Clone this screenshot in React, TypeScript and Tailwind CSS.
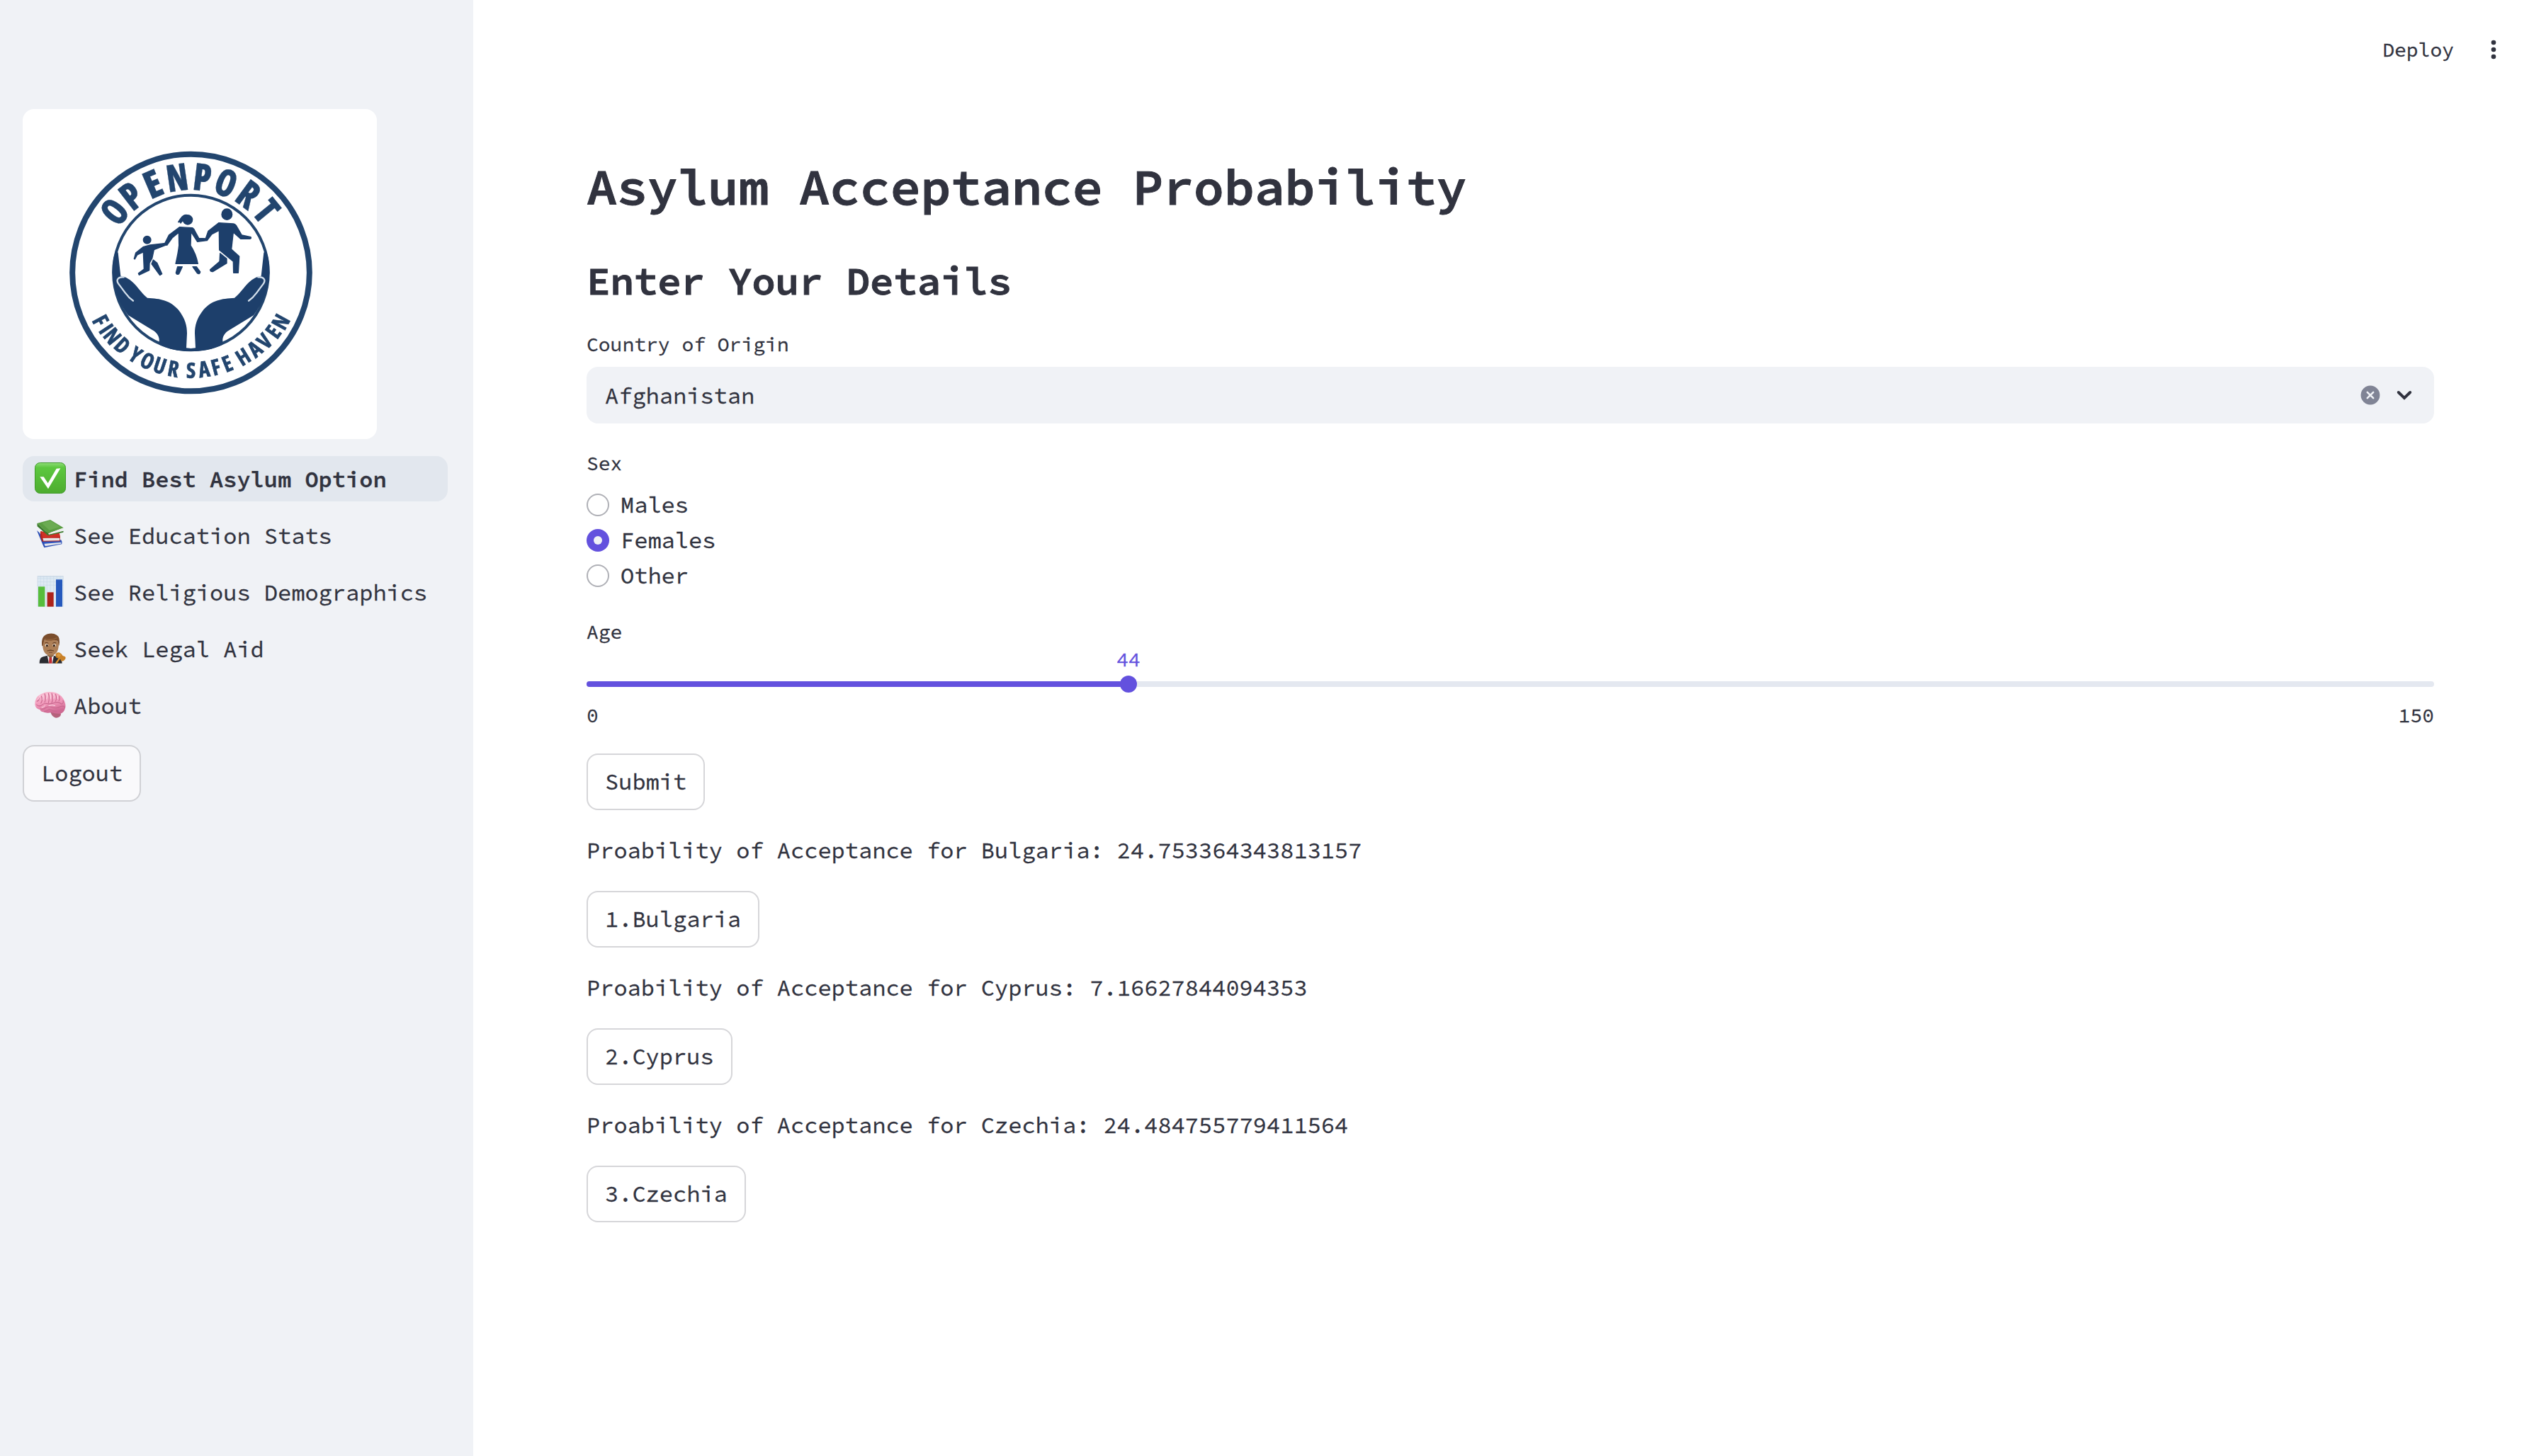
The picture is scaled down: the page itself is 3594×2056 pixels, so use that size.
import type { ReactNode } from "react";

const NAVY = "#1d3f6b";

// [letter, angle on the arc, baseline radius, horizontal scale]
const topLetters: [string, number, number, number][] = [
  ["O", -51.4, 357, 0.87], ["P", -37.8, 354, 0.92], ["E", -23.2, 351, 1], ["N", -8.2, 350, 0.87],
  ["P", 6.9, 350, 0.92], ["O", 21.4, 351, 0.87], ["R", 36.4, 354, 0.9], ["T", 50.8, 357, 0.92],
];

// [letter, angle on the arc, baseline radius]
const bottomLetters: [string, number, number][] = [
  ["F", 62, 467], ["I", 56.4, 464], ["N", 51, 461], ["D", 43.2, 457],
  ["Y", 34, 453], ["O", 26.2, 450], ["U", 18.4, 448], ["R", 10.3, 447],
  ["S", 0, 446], ["A", -7.8, 446], ["F", -14.8, 447], ["E", -21.8, 449],
  ["H", -31.8, 452], ["A", -39.9, 455], ["V", -47, 459], ["E", -54.3, 463], ["N", -61.3, 467],
];

function Hand() {
  return (
    <g>
      <path
        d="M250 462 L260 470 L271 569 C292 572 312 583 332 605 C350 625 366 648 384 662 C440 665 480 672 515 712 C545 750 552 780 552 812 L549 874 L569 876 L569 888 C520 888 475 880 434 860 L434 845 C436 825 424 808 404 797 L302 735 C262 680 240 620 236 555 C235 520 240 490 250 462 Z"
        fill={NAVY}
      />
      <path d="M284 574 C262 572 250 584 261 601 L290 640 Q306 662 324 674" fill="none" stroke="#d3dfeb" strokeWidth="7" strokeLinecap="round" />
    </g>
  );
}

function Logo() {
  return (
    <svg viewBox="-144 -138 1500 1398" className="block h-[466px] w-[500px] blur-[0.6px]">
      <circle cx="568.5" cy="555" r="502" fill="none" stroke="#22456e" strokeWidth="24" />
      <circle cx="568.5" cy="555" r="328" fill="none" stroke="#22456e" strokeWidth="12" />
      <g fill="#22456e" stroke="#22456e" className="font-['Open_Sans'] [font-stretch:75%]" textAnchor="middle">
        {topLetters.map(([c, a, r, s], i) => (
          <text key={i} fontSize="160" fontWeight="800" strokeWidth="1" transform={`translate(568.5 555) rotate(${a}) translate(0 ${-r}) scale(${s} 1)`}>
            {c}
          </text>
        ))}
        {bottomLetters.map(([c, a, r], i) => (
          <text key={i} fontSize="93" fontWeight="700" strokeWidth="2" transform={`translate(568.5 555) rotate(${a}) translate(0 ${r}) scale(0.97 1)`}>
            {c}
          </text>
        ))}
      </g>
      <Hand />
      <g transform="translate(1137 0) scale(-1 1)">
        <Hand />
      </g>
      <g fill={NAVY} stroke={NAVY} strokeWidth="4" strokeLinejoin="round">
        <circle cx="383" cy="416" r="16" />
        <path d="M328 496 L335 471 L366 446 L396 438 L456 431 L464 438 L412 458 L404 495 L393 514 L392 545 L349 565 L346 558 L370 540 L367 468 L341 480 L331 498 Z" />
        <path d="M409 501 L425 514 L446 560 L437 566 L402 518 Z" />
        <circle cx="555" cy="331" r="20" />
        <path d="M515 341 Q522 328 532 317 Q542 309 552 311 L540 334 L532 336 L525 345 L523 340 Z" />
        <path d="M520 362 L574 365 Q582 368 586 380 L602 409 L632 411 L636 419 L596 424 L569 382 L567 440 Q590 475 598 517 L504 517 Q515 470 518 440 L517 385 L490 407 L467 439 L458 431 L476 395 Z" />
        <path d="M512 530 L532 530 L518 560 Q508 566 505 556 Z" />
        <path d="M576 530 L592 530 L608 552 Q606 564 596 558 Z" />
        <ellipse cx="721" cy="308" rx="22" ry="23" />
        <path d="M686 344 L748 348 Q758 350 764 362 L784 396 L822 404 Q826 410 818 412 L779 412 L748 384 L740 456 L773 486 L769 556 L749 556 L748 508 L689 459 L688 376 L656 393 L637 419 L631 410 L642 379 Z" />
        <path d="M692 473 L720 496 L720 515 L661 551 Q650 552 650 542 L690 508 Z" />
      </g>
    </svg>
  );
}

function EmojiFrame({ children }: { children: ReactNode }) {
  return (
    <svg viewBox="0 0 132 132" className="-mt-[2px] block h-11 w-11 shrink-0">
      {children}
    </svg>
  );
}

function CheckEmoji() {
  return (
    <EmojiFrame>
      <defs>
        <linearGradient id="chk" x1="0" y1="0" x2="0" y2="1">
          <stop offset="0" stopColor="#8fdc78" />
          <stop offset="0.16" stopColor="#5cc73f" />
          <stop offset="1" stopColor="#4dac2f" />
        </linearGradient>
      </defs>
      <rect x="1.5" y="1.5" width="129" height="129" rx="21" fill="url(#chk)" stroke="#3f9a2a" strokeWidth="3" />
      <path d="M22 61 L38 61 L56 88 L92 26 L109 25 L57 112 Z" fill="#fff" />
    </EmojiFrame>
  );
}

function BooksEmoji() {
  return (
    <EmojiFrame>
      <path d="M9 48 L20 58 L46 106 L114 92 L115 99 L115 106 L40 121 L34 108 Z" fill="#2c4fb4" />
      <path d="M40 104 L112 93 L112 104 L44 115 Z" fill="#e4e6ea" />
      <path d="M30 92 L112 88 L116 98 L44 104 Z" fill="#2f56bf" />
      <path d="M24 52 L104 60 L108 78 L107 94 L32 95 L24 76 Z" fill="#b32420" />
      <path d="M34 80 L106 80 L105 91 L37 92 Z" fill="#e8e6e4" />
      <path d="M26 50 L56 66 L104 58 L108 76 L34 80 Z" fill="#cf3126" />
      <path d="M10 18 L66 3 L122 37 L57 61 Z" fill="#5a9d42" />
      <path d="M30 17 L66 7 L108 33 L62 47 Z" fill="#6bab52" />
      <path d="M57 61 L120 38 L117 54 L60 66 Z" fill="#eceeed" />
      <path d="M10 18 L57 61 L59 66 L122 50 L121 56 L56 70 L11 31 Z" fill="#3b7a2c" />
    </EmojiFrame>
  );
}

function ChartEmoji() {
  return (
    <EmojiFrame>
      <rect x="11" y="0" width="111" height="131" fill="#cfdce8" />
      <rect x="14" y="5" width="105" height="126" fill="#dfeaf4" />
      <path d="M24 0V131M38 0V131M52 0V131M66 0V131M80 0V131M94 0V131M108 0V131M11 12H122M11 26H122M11 40H122" stroke="#c9dae8" strokeWidth="2" />
      <rect x="15" y="46" width="28" height="85" fill="#57bd3c" />
      <rect x="53" y="70" width="27" height="61" fill="#ad231b" />
      <rect x="90" y="16" width="27" height="115" fill="#2659bd" />
    </EmojiFrame>
  );
}

function JudgeEmoji() {
  return (
    <EmojiFrame>
      <path d="M20 131 Q20 106 36 103 L54 98 L80 98 L98 104 Q116 108 116 131 Z" fill="#2b2c31" />
      <path d="M53 97 L67 108 L81 97 L75 131 L60 131 Z" fill="#f0f0f2" />
      <path d="M62 104 L72 104 L74 131 L60 131 Z" fill="#c12a2e" />
      <path d="M54 84 H80 V98 L67 107 L54 98 Z" fill="#8d6340" />
      <path d="M33 44 Q33 88 55 95 Q67 101 79 95 Q102 88 102 44 Q84 22 67 22 Q46 22 33 44 Z" fill="#ad7f57" />
      <path d="M31 58 Q25 16 54 7 Q76 0 93 11 Q110 20 103 58 L99 40 Q94 30 78 33 Q56 37 42 31 Q36 42 35 56 Z" fill="#7a4d2c" />
      <path d="M42 27 Q66 36 95 23" stroke="#94643b" strokeWidth="4" fill="none" />
      <ellipse cx="51" cy="55" rx="7" ry="6" fill="#f6efe6" />
      <ellipse cx="83" cy="55" rx="7" ry="6" fill="#f6efe6" />
      <circle cx="52" cy="56" r="5" fill="#3a2314" />
      <circle cx="82" cy="56" r="5" fill="#3a2314" />
      <path d="M43 45 Q51 41 58 46M76 46 Q84 41 91 45" stroke="#5a3620" strokeWidth="3" fill="none" />
      <path d="M53 78 Q67 71 81 78 Q74 77 67 77 Q60 77 53 78 Z" fill="#6b4428" stroke="#6b4428" strokeWidth="2.5" />
      <path d="M60 85 H75" stroke="#7a4a35" strokeWidth="3" />
      <path d="M90 131 L108 106" stroke="#e0922b" strokeWidth="7" />
      <path d="M88 96 Q90 84 103 85 L112 90 L119 99 L129 103 Q135 112 122 121 L112 122 L108 112 L92 108 Z" fill="#c98128" />
      <path d="M92 96 L102 88 L112 96 L102 106 Z" fill="#d99a40" />
    </EmojiFrame>
  );
}

function BrainEmoji() {
  return (
    <EmojiFrame>
      <defs>
        <linearGradient id="brn" x1="0" y1="0" x2="0.3" y2="1">
          <stop offset="0" stopColor="#fbc4d6" />
          <stop offset="0.6" stopColor="#f097b9" />
          <stop offset="1" stopColor="#cf6a93" />
        </linearGradient>
      </defs>
      <path d="M66 96 Q74 120 90 122 Q108 121 111 108 L108 92 Z" fill="#b5627c" />
      <path d="M1 66 Q0 34 26 22 Q48 8 76 13 Q106 17 120 40 Q134 62 129 80 Q125 98 110 104 Q88 106 70 99 Q52 104 36 97 Q24 96 23 88 Q4 84 1 66 Z" fill="url(#brn)" />
      <g fill="none" stroke="#c9698f" strokeWidth="3.4" strokeLinecap="round">
        <path d="M8 66 Q16 76 30 68 Q40 58 54 62 Q72 64 84 58 Q98 52 112 62" />
        <path d="M24 84 Q38 88 48 78 Q62 72 76 78 Q92 84 108 74 Q120 70 128 76" />
        <path d="M40 96 Q54 92 62 86 Q76 92 92 94" />
        <path d="M10 52 Q20 48 18 36M26 60 Q36 46 28 30M42 56 Q50 40 42 20M58 58 Q64 38 58 18M72 58 Q80 42 72 18M88 52 Q96 38 88 22M102 50 Q108 44 104 30M114 64 Q124 60 120 48" />
      </g>
      <g fill="none" stroke="#ffe0ea" strokeWidth="3" strokeLinecap="round">
        <path d="M14 44 Q18 34 24 28M34 44 Q38 34 36 26M50 42 Q54 30 52 20M66 42 Q70 30 66 20M81 40 Q84 32 80 22M97 40 Q99 34 96 28M30 78 Q40 76 44 70M60 70 Q74 66 86 70" />
      </g>
    </EmojiFrame>
  );
}

const navItems = [
  { icon: <CheckEmoji />, label: "Find Best Asylum Option", active: true },
  { icon: <BooksEmoji />, label: "See Education Stats", active: false },
  { icon: <ChartEmoji />, label: "See Religious Demographics", active: false },
  { icon: <JudgeEmoji />, label: "Seek Legal Aid", active: false },
  { icon: <BrainEmoji />, label: "About", active: false },
];

function Button({ children }: { children: ReactNode }) {
  return (
    <button className="flex h-20 w-fit shrink-0 items-center rounded-2xl border-2 border-[#d6d6d9] bg-white px-6 text-[32px] leading-none">
      {children}
    </button>
  );
}

function Sidebar() {
  return (
    <aside className="flex w-[668px] shrink-0 flex-col bg-[#f0f2f6] px-8 pt-[154px]">
      <div className="h-[466px] w-[500px] overflow-hidden rounded-2xl bg-white">
        <Logo />
      </div>
      <nav className="mt-6 flex w-[600px] flex-col gap-4">
        {navItems.map((n) => (
          <a
            key={n.label}
            className={
              n.active
                ? "flex h-16 items-center gap-[11px] rounded-2xl bg-[#e2e7ee] pl-[17px] font-semibold"
                : "flex h-16 items-center gap-[11px] rounded-2xl pl-[17px]"
            }
          >
            {n.icon}
            <span className="pt-px text-[32px] leading-none whitespace-nowrap">{n.label}</span>
          </a>
        ))}
      </nav>
      <button className="mt-6 flex h-20 w-fit items-center rounded-2xl border-2 border-[#d0d1d5] bg-[#f9f9fb] px-6 text-[32px] leading-none">
        Logout
      </button>
    </aside>
  );
}

function Label({ children }: { children: ReactNode }) {
  return <div className="flex h-11 items-center text-[28px] leading-none">{children}</div>;
}

function Radio({ label, checked }: { label: string; checked?: boolean }) {
  return (
    <label className="flex h-[50px] items-center gap-4">
      {checked ? (
        <span className="flex h-8 w-8 items-center justify-center rounded-full bg-[#6351de]">
          <span className="h-3 w-3 rounded-full bg-[#f0f2f6]" />
        </span>
      ) : (
        <span className="h-8 w-8 rounded-full border-2 border-[#afb0b6] bg-white" />
      )}
      <span className="text-[32px] leading-none">{label}</span>
    </label>
  );
}

function Slider({ value, max }: { value: number; max: number }) {
  const filled = { width: `${(value / max) * 100}%` };
  return (
    <div className="flex flex-col">
      <div className="flex h-[34px] justify-end" style={filled}>
        <span className="flex w-0 items-center justify-center text-[28px] leading-none text-[#6351de]">{value}</span>
      </div>
      <div className="mt-[14px] flex h-2 rounded bg-[#e4e8f0]">
        <div className="flex items-center justify-end rounded-l bg-[#6351de]" style={filled}>
          <span className="-mr-3 h-6 w-6 shrink-0 rounded-full bg-[#6351de]" />
        </div>
      </div>
      <div className="mt-[18px] flex h-11 items-center justify-between text-[28px] leading-none">
        <span>0</span>
        <span>{max}</span>
      </div>
    </div>
  );
}

const results = [
  { country: "Bulgaria", value: "24.753364343813157" },
  { country: "Cyprus", value: "7.16627844094353" },
  { country: "Czechia", value: "24.484755779411564" },
];

export default function App() {
  return (
    <div className="flex h-[2056px] w-[3594px] overflow-hidden bg-white font-['Source_Code_Pro','Liberation_Mono',monospace] text-[#31333f] [-webkit-text-stroke-width:0.3px]">
      <Sidebar />
      <main className="flex min-w-0 flex-1 flex-col">
        <header className="flex h-[140px] shrink-0 items-center justify-end gap-10 pr-[58px]">
          <span className="text-[28px] leading-none">Deploy</span>
          <svg viewBox="0 0 32 32" className="h-8 w-8" fill="#31333f">
            <circle cx="16" cy="6" r="3.3" />
            <circle cx="16" cy="16" r="3.3" />
            <circle cx="16" cy="26" r="3.3" />
          </svg>
        </header>
        <div className="flex flex-col pt-[80px] pr-[158px] pl-[160px]">
          <h1 className="flex h-[87px] items-center text-[72px] leading-none font-semibold tracking-[-0.005em] [-webkit-text-stroke-width:1px]">
            Asylum Acceptance Probability
          </h1>
          <h2 className="mt-[55px] flex h-[68px] items-center text-[56px] leading-none font-semibold tracking-[-0.005em] [-webkit-text-stroke-width:1px]">
            Enter Your Details
          </h2>

          <div className="mt-[34px]">
            <Label>Country of Origin</Label>
          </div>
          <div className="mt-[10px] flex h-20 items-center rounded-2xl bg-[#f0f2f6] pr-[26px] pl-[26px]">
            <span className="flex-1 pt-[2px] text-[32px] leading-none">Afghanistan</span>
            <svg viewBox="0 0 32 32" className="h-8 w-8">
              <circle cx="16" cy="16" r="13.4" fill="#808495" />
              <path d="M11.8 11.8 L20.2 20.2 M20.2 11.8 L11.8 20.2" stroke="#f0f2f6" strokeWidth="2.6" strokeLinecap="round" />
            </svg>
            <svg viewBox="0 0 32 32" className="ml-4 h-8 w-8">
              <path d="M7.8 12 L16 20 L24.2 12" fill="none" stroke="#31333f" strokeWidth="4" strokeLinecap="round" strokeLinejoin="miter" />
            </svg>
          </div>

          <div className="mt-[34px]">
            <Label>Sex</Label>
          </div>
          <div className="mt-3 flex flex-col">
            <Radio label="Males" />
            <Radio label="Females" checked />
            <Radio label="Other" />
          </div>

          <div className="mt-8">
            <Label>Age</Label>
          </div>
          <Slider value={44} max={150} />

          <div className="mt-8">
            <Button>Submit</Button>
          </div>
          {results.map((r, i) => (
            <div key={r.country} className="mt-8 flex flex-col gap-8">
              <p className="text-[32px] leading-[50px]">
                Proability of Acceptance for {r.country}: {r.value}
              </p>
              <Button>
                {i + 1}.{r.country}
              </Button>
            </div>
          ))}
        </div>
      </main>
    </div>
  );
}
